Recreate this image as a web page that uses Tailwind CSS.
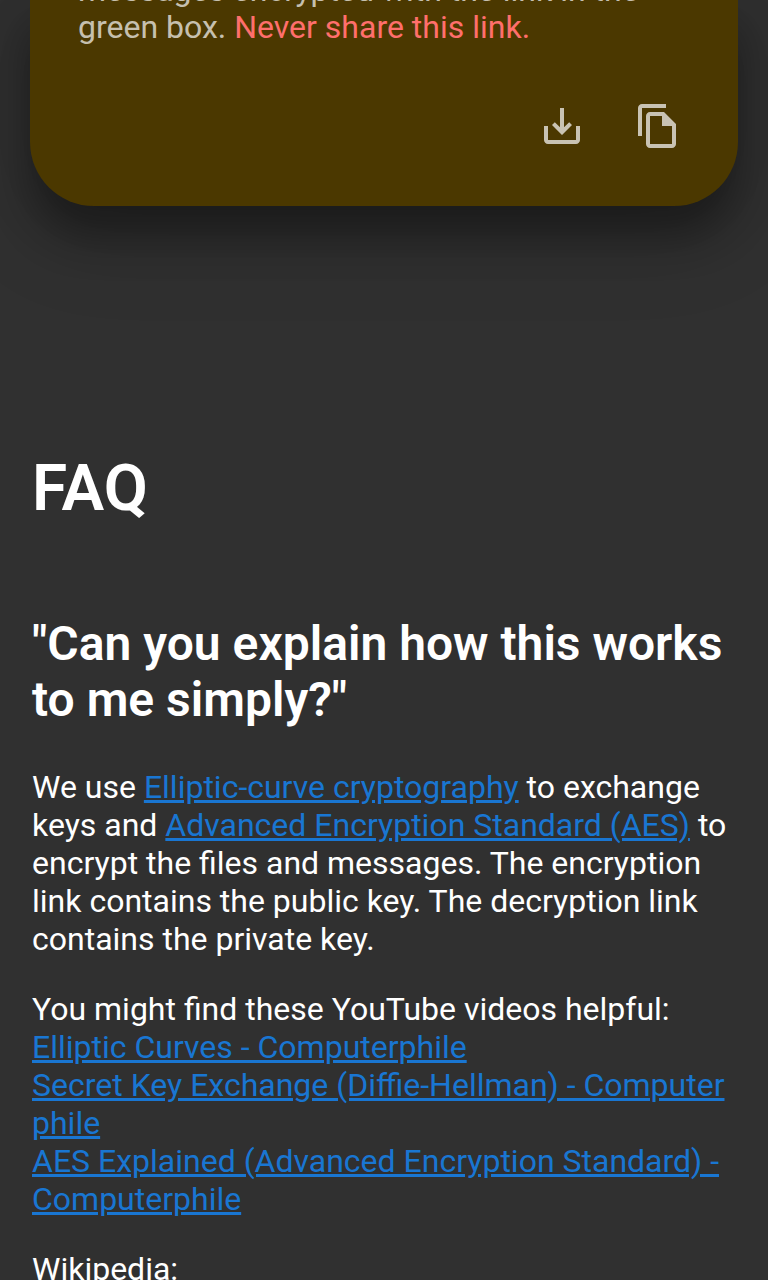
<!DOCTYPE html>
<html lang="en">
<head>
<meta charset="utf-8">
<meta name="viewport" content="width=device-width, initial-scale=1">
<title>FAQ</title>
<script src="https://cdn.jsdelivr.net/npm/@tailwindcss/browser@4"></script>
</head>
<body class="h-screen overflow-hidden bg-[#303030] font-['Roboto',sans-serif] text-[32px] leading-[38px] text-white">
<main>
  <section class="mx-[30px] rounded-b-[64px] bg-[#4b3800] p-8 pt-0 shadow-[0_30px_40px_0_rgba(0,0,0,0.36),0_18px_92px_16px_rgba(0,0,0,0.12)]">
    <div class="flex h-[46px] flex-col justify-end px-4 leading-[37px] text-white/70">
      <p>messages encrypted with the link in the green box. <span class="text-[#ff6f6c]">Never share this link.</span></p>
    </div>
    <div class="mt-8 flex justify-end text-white/70">
      <button type="button" aria-label="Download" class="p-6">
        <svg class="size-12" viewBox="0 0 24 24" fill="currentColor" aria-hidden="true"><path d="M19 12v7H5v-7H3v7c0 1.1.9 2 2 2h14c1.1 0 2-.9 2-2v-7h-2zm-6 .67l2.59-2.58L17 11.5l-5 5-5-5 1.41-1.41L11 12.67V3h2v9.67z"/></svg>
      </button>
      <button type="button" aria-label="Copy" class="p-6">
        <svg class="size-12" viewBox="0 0 24 24" fill="currentColor" aria-hidden="true"><path d="M16 1H4c-1.1 0-2 .9-2 2v14h2V3h12V1zm-1 4H8c-1.1 0-1.99.9-1.99 2L6 21c0 1.1.89 2 1.99 2H19c1.1 0 2-.9 2-2V11l-6-6zM8 21V7h6v5h5v9H8z"/></svg>
      </button>
    </div>
  </section>

  <section class="mt-[245px] px-8">
    <h2 class="text-[64px] leading-[76px] font-semibold">FAQ</h2>
    <h3 class="mt-[89px] text-[48px] leading-[56px] font-semibold">"Can you explain how this works to me simply?"</h3>
    <p class="mt-10">We use <a href="#ecc" class="break-all text-[#1976d2] underline">Elliptic-curve cryptography</a> to exchange keys and <a href="#aes" class="break-all text-[#1976d2] underline">Advanced Encryption Standard (AES)</a> to encrypt the files and messages. The encryption link contains the public key. The decryption link contains the private key.</p>
    <p class="mt-8">You might find these YouTube videos helpful:<br>
      <a href="#curves" class="break-all text-[#1976d2] underline">Elliptic Curves - Computerphile</a><br>
      <a href="#exchange" class="break-all text-[#1976d2] underline">Secret Key Exchange (Diffie-Hellman) - Computerphile</a><br>
      <a href="#explained" class="break-all text-[#1976d2] underline">AES Explained (Advanced Encryption Standard) - Computerphile</a></p>
    <p class="mt-8">Wikipedia:</p>
  </section>
</main>
</body>
</html>
